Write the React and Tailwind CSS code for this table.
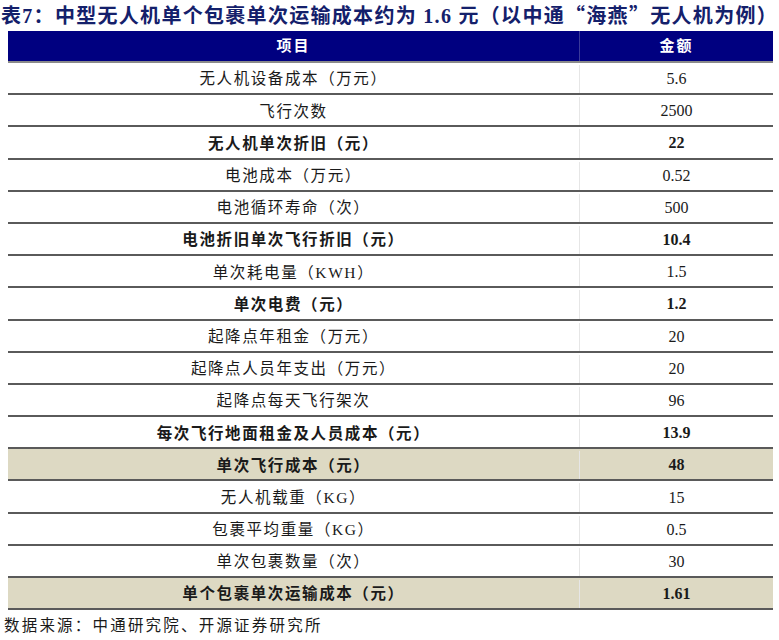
import React from 'react';

/* rows: [label, value, bold, shaded] */
const ROWS = [
  ['无人机设备成本（万元）', '5.6'],
  ['飞行次数', '2500'],
  ['无人机单次折旧（元）', '22', true],
  ['电池成本（万元）', '0.52'],
  ['电池循环寿命（次）', '500'],
  ['电池折旧单次飞行折旧（元）', '10.4', true],
  ['单次耗电量（KWH）', '1.5'],
  ['单次电费（元）', '1.2', true],
  ['起降点年租金（万元）', '20'],
  ['起降点人员年支出（万元）', '20'],
  ['起降点每天飞行架次', '96'],
  ['每次飞行地面租金及人员成本（元）', '13.9', true],
  ['单次飞行成本（元）', '48', true, true],
  ['无人机载重（KG）', '15'],
  ['包裹平均重量（KG）', '0.5'],
  ['单次包裹数量（次）', '30'],
  ['单个包裹单次运输成本（元）', '1.61', true, true],
];

const serif = "font-['Liberation_Serif','Noto_Sans_CJK_SC',serif]";
const cjk = "font-['Noto_Sans_CJK_SC',sans-serif]";

export default function App() {
  return (
    <div className={`w-[779px] h-[640px] bg-white ${serif} text-[#1a1a1a]`}>
      {/* title */}
      <div className="h-[31px] pl-[1px] pt-[2px] text-[20px] font-bold leading-[26px] tracking-[1.3px] text-[#14206b] whitespace-nowrap">
        表7：中型无人机单个包裹单次运输成本约为 1.6 元（以中通<span className={cjk}>“</span>海燕<span className={cjk}>”</span>无人机为例）
      </div>

      {/* table */}
      <div className="ml-[8px] w-[765px]">
        <div className="flex h-[32px] bg-[#000080] border-b-2 border-[#8a8a8a] text-white text-[15px] font-bold tracking-[2px]">
          <div className="w-[572px] flex items-center justify-center border-r border-[#3a3a9a]">项目</div>
          <div className="flex-1 flex items-center justify-center">金额</div>
        </div>
        {ROWS.map(([label, val, bold, shaded], i) => (
          <div
            key={i}
            className={`flex h-[32.2px] pt-[2px] border-b-2 border-[#5a5a5a] text-[15.5px] ${bold ? 'font-bold' : ''} ${shaded ? 'bg-[#ddd9c3]' : ''}`}
          >
            <div className="w-[572px] flex items-center justify-center tracking-[1.6px] border-r border-[#e6e6e6]">{label}</div>
            <div className="flex-1 flex items-center justify-center text-[16px]">{val}</div>
          </div>
        ))}
      </div>

      {/* source */}
      <div className="pl-[4px] pt-[6px] text-[15.5px] tracking-[2.2px] leading-[20px]">
        数据来源：中通研究院、开源证券研究所
      </div>
    </div>
  );
}
